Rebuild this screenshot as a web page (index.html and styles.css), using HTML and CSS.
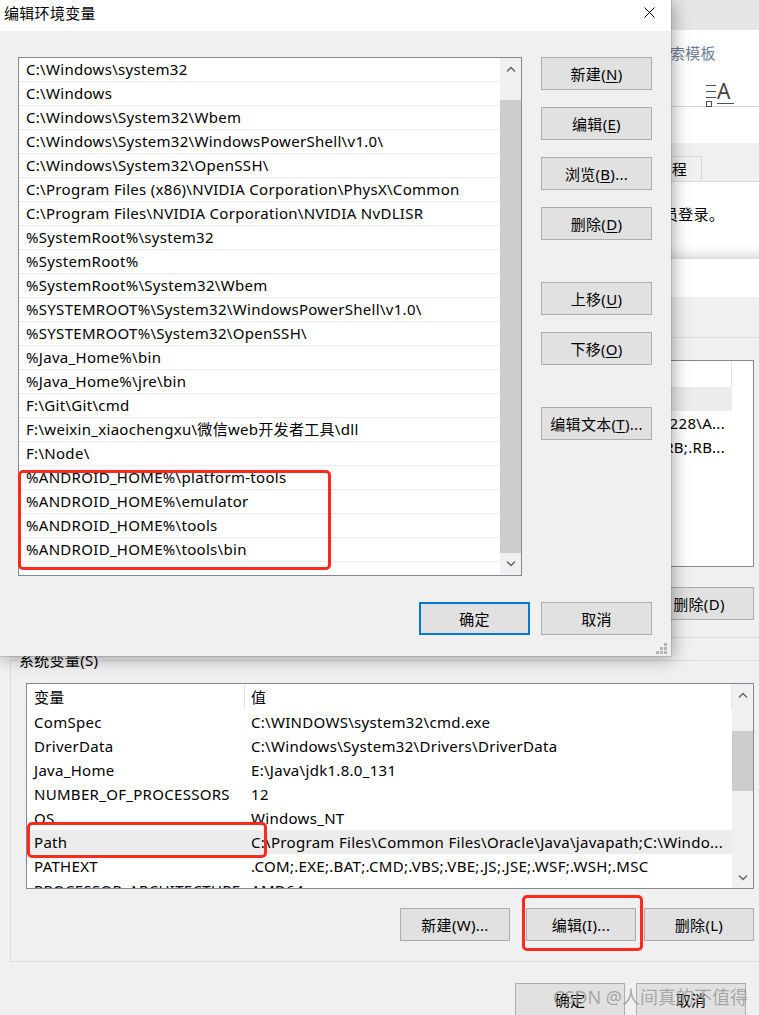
FILE: index.html
```html
<!DOCTYPE html>
<html lang="zh-CN">
<head>
<meta charset="utf-8">
<title>编辑环境变量</title>
<link rel="stylesheet" href="styles.css">
</head>
<body>

<div class="win app">
  <div class="app-top"></div>
  <div class="app-body">
    <div class="app-search">索模板</div>
    <svg class="app-icon" width="30" height="24" viewBox="0 0 30 24">
      <path d="M1 3.5H11M1 9.5H11M1 15.5H11M12 21.5H29" stroke="#505050" fill="none"/>
      <rect x="1.5" y="19.5" width="5" height="5" stroke="#505050" fill="none"/>
      <text x="12" y="17" font-size="21" fill="#444" font-family="Noto Sans">A</text>
    </svg>
  </div>
</div>

<div class="win sysprops">
  <div class="sp-title"></div>
  <div class="sp-body">
    <div class="tabs">
      <span class="tab">程</span>
    </div>
    <div class="tabpage"><p class="sp-note">员登录。</p></div>
  </div>
</div>

<div class="win envwin">
  <div class="env-title"></div>
  <div class="env-body">
    <section class="group user">
      <div class="lv lv-user">
        <div class="lv-main">
          <div class="lv-head"><span class="c1"></span><span class="c2"></span></div>
          <div class="lv-row sel"><span class="c1"></span><span class="c2"></span></div>
          <div class="lv-row"><span class="c1"></span><span class="c2 r">0_228\A...</span></div>
          <div class="lv-row"><span class="c1"></span><span class="c2 r">.RB;.RB...</span></div>
          <div class="lv-row"><span class="c1"></span><span class="c2"></span></div>
        </div>
      </div>
      <div class="grp-btns">
        <button class="btn"></button>
        <button class="btn"></button>
        <button class="btn">删除(D)</button>
      </div>
    </section>

    <section class="group sys">
      <span class="group-label">系统变量(S)</span>
      <div class="lv lv-sys">
        <div class="lv-main">
          <div class="lv-head"><span class="c1">变量</span><span class="c2">值</span></div>
          <div class="lv-row"><span class="c1">ComSpec</span><span class="c2">C:\WINDOWS\system32\cmd.exe</span></div>
          <div class="lv-row"><span class="c1">DriverData</span><span class="c2">C:\Windows\System32\Drivers\DriverData</span></div>
          <div class="lv-row"><span class="c1">Java_Home</span><span class="c2">E:\Java\jdk1.8.0_131</span></div>
          <div class="lv-row"><span class="c1">NUMBER_OF_PROCESSORS</span><span class="c2">12</span></div>
          <div class="lv-row"><span class="c1">OS</span><span class="c2">Windows_NT</span></div>
          <div class="lv-row sel"><span class="c1">Path</span><span class="c2">C:\Program Files\Common Files\Oracle\Java\javapath;C:\Windo...</span></div>
          <div class="lv-row"><span class="c1">PATHEXT</span><span class="c2">.COM;.EXE;.BAT;.CMD;.VBS;.VBE;.JS;.JSE;.WSF;.WSH;.MSC</span></div>
          <div class="lv-row"><span class="c1">PROCESSOR_ARCHITECTURE</span><span class="c2">AMD64</span></div>
        </div>
        <div class="vscroll">
          <div class="sb-btn"><svg width="10" height="6" viewBox="0 0 10 6"><path d="M1 5.5L5 1.5L9 5.5" stroke="#606060" stroke-width="1.3" fill="none"/></svg></div>
          <div class="sb-gap sys-gap"></div>
          <div class="sb-thumb sys-thumb"></div>
          <div class="sb-rest"></div>
          <div class="sb-btn"><svg width="10" height="6" viewBox="0 0 10 6"><path d="M1 0.5L5 4.5L9 0.5" stroke="#606060" stroke-width="1.3" fill="none"/></svg></div>
        </div>
      </div>
      <div class="grp-btns">
        <button class="btn">新建(W)...</button>
        <button class="btn">编辑(I)...</button>
        <button class="btn">删除(L)</button>
      </div>
    </section>

    <div class="env-foot">
      <button class="btn">确定</button>
      <button class="btn">取消</button>
    </div>
  </div>
</div>

<div class="win dialog">
  <div class="d-title">
    <span>编辑环境变量</span>
    <svg class="d-close" width="11" height="11" viewBox="0 0 11 11"><path d="M0.5 0.5L10.5 10.5M10.5 0.5L0.5 10.5" stroke="#000" stroke-width="1"/></svg>
  </div>
  <div class="d-body">
    <div class="elist">
      <div class="elist-rows">
        <div class="erow">C:\Windows\system32</div>
        <div class="erow">C:\Windows</div>
        <div class="erow">C:\Windows\System32\Wbem</div>
        <div class="erow">C:\Windows\System32\WindowsPowerShell\v1.0\</div>
        <div class="erow">C:\Windows\System32\OpenSSH\</div>
        <div class="erow">C:\Program Files (x86)\NVIDIA Corporation\PhysX\Common</div>
        <div class="erow">C:\Program Files\NVIDIA Corporation\NVIDIA NvDLISR</div>
        <div class="erow">%SystemRoot%\system32</div>
        <div class="erow">%SystemRoot%</div>
        <div class="erow">%SystemRoot%\System32\Wbem</div>
        <div class="erow">%SYSTEMROOT%\System32\WindowsPowerShell\v1.0\</div>
        <div class="erow">%SYSTEMROOT%\System32\OpenSSH\</div>
        <div class="erow">%Java_Home%\bin</div>
        <div class="erow">%Java_Home%\jre\bin</div>
        <div class="erow">F:\Git\Git\cmd</div>
        <div class="erow">F:\weixin_xiaochengxu\微信web开发者工具\dll</div>
        <div class="erow">F:\Node\</div>
        <div class="erow">%ANDROID_HOME%\platform-tools</div>
        <div class="erow">%ANDROID_HOME%\emulator</div>
        <div class="erow">%ANDROID_HOME%\tools</div>
        <div class="erow">%ANDROID_HOME%\tools\bin</div>
        <div class="erow"></div>
      </div>
      <div class="vscroll">
        <div class="sb-btn"><svg width="10" height="6" viewBox="0 0 10 6"><path d="M1 5.5L5 1.5L9 5.5" stroke="#606060" stroke-width="1.3" fill="none"/></svg></div>
        <div class="sb-gap e-gap"></div>
        <div class="sb-thumb e-thumb"></div>
        <div class="sb-rest"></div>
        <div class="sb-btn e-down"><svg width="10" height="6" viewBox="0 0 10 6"><path d="M1 0.5L5 4.5L9 0.5" stroke="#606060" stroke-width="1.3" fill="none"/></svg></div>
      </div>
    </div>
    <div class="d-btns">
      <button class="btn">新建(<u>N</u>)</button>
      <button class="btn">编辑(<u>E</u>)</button>
      <button class="btn">浏览(<u>B</u>)...</button>
      <button class="btn sep">删除(<u>D</u>)</button>
      <button class="btn">上移(<u>U</u>)</button>
      <button class="btn sep">下移(<u>O</u>)</button>
      <button class="btn">编辑文本(<u>T</u>)...</button>
    </div>
  </div>
  <div class="d-foot">
    <button class="btn default">确定</button>
    <button class="btn">取消</button>
  </div>
  <svg class="grip" width="11" height="11" viewBox="0 0 11 11">
    <rect x="8" y="0" width="3" height="3" fill="#b4b4b4"/>
    <rect x="4" y="4" width="3" height="3" fill="#b4b4b4"/>
    <rect x="8" y="4" width="3" height="3" fill="#b4b4b4"/>
    <rect x="0" y="8" width="3" height="3" fill="#b4b4b4"/>
    <rect x="4" y="8" width="3" height="3" fill="#b4b4b4"/>
    <rect x="8" y="8" width="3" height="3" fill="#b4b4b4"/>
  </svg>
</div>

<div class="mark m-android"></div>
<div class="mark m-path"></div>
<div class="mark m-edit"></div>
<div class="wm">CSDN @人间真的不值得</div>

</body>
</html>
```

FILE: styles.css
```css
* { box-sizing: border-box; }
html, body { margin: 0; padding: 0; }
body {
  position: relative;
  width: 759px;
  height: 1015px;
  overflow: hidden;
  background: #f0f0f0;
  font-family: "Noto Sans", "Noto Sans CJK SC", sans-serif;
  font-size: 15px;
  letter-spacing: 0.3px;
  color: #000;
}
button { font: inherit; letter-spacing: inherit; color: inherit; margin: 0; padding: 0; }
u { text-underline-offset: 2px; }

.win { position: absolute; left: 0; }

/* application behind everything */
.app { top: 0; width: 759px; height: 107px; background: #fff; border-bottom: 1px solid #d6d6d6; }
.app-top { height: 30px; background: #e6e6e6; }
.app-body { padding-top: 13px; }
.app-search { margin-left: 670px; line-height: 20px; color: #6c7c95; }
.app-icon { display: block; margin: 19px 0 0 705px; overflow: visible; }

/* system properties */
.sysprops { top: 107px; width: 759px; height: 200px; background: #f0f0f0; }
.sp-title { height: 36px; background: #fff; }
.sp-body { padding-top: 13px; }
.tabs { display: flex; justify-content: flex-end; padding-right: 57px; height: 25px; }
.tab { padding: 0 14px 0 29px; border: 1px solid #d9d9d9; border-bottom: 0; line-height: 24px; background: #f0f0f0; }
.tabpage { background: #fff; border-top: 1px solid #d9d9d9; height: 120px; padding: 20px 0 0 663px; }
.sp-note { margin: 0; line-height: 24px; white-space: nowrap; }

/* environment variables */
.envwin { top: 259px; width: 790px; height: 800px; background: #f0f0f0; box-shadow: 0 0 14px rgba(0,0,0,.28); }
.env-title { height: 38px; background: #fff; }
.env-body { padding: 40px 20px 0 10px; }
.group { position: relative; border: 1px solid #dcdcdc; padding: 22px 15px 17px; }
.group + .group { margin-top: 22px; }
.group.sys { padding-bottom: 20px; }
.group-label { position: absolute; left: 6px; top: -11px; padding: 0 2px; background: #f0f0f0; line-height: 20px; }

.lv { display: flex; background: #fff; border: 1px solid #828790; overflow: hidden; }
.lv-user { height: 207px; }
.lv-sys { height: 206px; }
.lv-main { width: 705px; flex: none; }
.lv-head { display: flex; height: 26px; line-height: 26px; }
.lv-head .c1, .lv-head .c2 { border-right: 1px solid #e5e5e5; }
.lv-row { display: flex; height: 24px; line-height: 24px; }
.lv-row.sel { background: #ececec; }
.c1 { width: 218px; flex: none; padding-left: 7px; white-space: nowrap; overflow: hidden; }
.c2 { flex: 1; padding-left: 6px; white-space: nowrap; overflow: hidden; }
.c2.r { text-align: right; padding-right: 7px; }

.vscroll { width: 21px; flex: none; background: #f0f0f0; display: flex; flex-direction: column; }
.sb-btn { height: 21px; flex: none; display: flex; align-items: center; justify-content: center; }
.sb-gap, .sb-thumb { flex: none; }
.sb-thumb { background: #cdcdcd; }
.sb-rest { flex: 1; }
.sys-gap { height: 26px; }
.sys-thumb { height: 60px; }
.e-gap { height: 21px; }
.e-thumb { height: 453px; }
.e-down { height: 22px; }

.btn { height: 33px; width: 110px; background: #e1e1e1; border: 1px solid #adadad; display: flex; align-items: center; justify-content: center; line-height: 20px; }
.grp-btns { display: flex; justify-content: flex-end; margin-top: 20px; }
.group.sys .grp-btns { margin-top: 19px; }
.grp-btns .btn + .btn { margin-left: 8px; }
.grp-btns .btn:nth-child(2) { margin-left: 16px; }
.env-foot { display: flex; justify-content: flex-end; gap: 11px; margin-top: 21px; padding-right: 24px; }

/* foreground dialog */
.dialog { top: 0; width: 671px; height: 656px; background: #f0f0f0; box-shadow: 2px 2px 16px rgba(0,0,0,.35), 0 0 0 1px rgba(0,0,0,.1); }
.d-title { height: 31px; background: #fff; display: flex; justify-content: space-between; align-items: flex-start; padding: 3px 16px 0 4px; line-height: 20px; }
.d-close { margin-top: 4px; }
.d-body { display: flex; padding: 26px 19px 0 18px; }
.elist { width: 504px; height: 519px; border: 1px solid #828790; background: #fff; display: flex; flex: none; }
.elist-rows { width: 481px; flex: none; overflow: hidden; }
.erow { height: 24px; line-height: 23px; padding-left: 7px; border-bottom: 1px solid #ededed; white-space: nowrap; }
.d-btns { margin-left: 19px; display: flex; flex-direction: column; }
.d-btns .btn { width: 111px; margin-bottom: 17px; }
.d-btns .btn.sep { margin-bottom: 42px; }
.d-foot { display: flex; justify-content: flex-end; gap: 11px; padding: 26px 19px 0 0; }
.d-foot .btn { width: 111px; }
.btn.default { border: 2px solid #0078d7; }
.grip { position: absolute; right: 4px; bottom: 2px; }

/* annotations */
.mark { position: absolute; border: 3px solid #ff2a1f; border-radius: 5px; }
.m-android { left: 18px; top: 470px; width: 313px; height: 100px; }
.m-path { left: 27px; top: 822px; width: 240px; height: 36px; }
.m-edit { left: 522px; top: 895px; width: 121px; height: 56px; }
.wm { position: absolute; left: 553px; top: 987px; font-size: 18px; line-height: 20px; letter-spacing: 0; color: rgba(150,150,150,.8); white-space: nowrap; }
```
